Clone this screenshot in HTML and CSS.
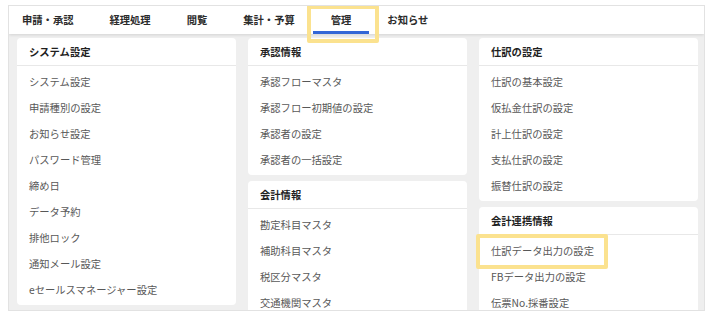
FILE: index.html
```html
<!DOCTYPE html>
<html lang="ja">
<head>
    <meta charset="UTF-8">
    <meta name="viewport" content="width=device-width, initial-scale=1.0">
    <title>管理</title>
    <link rel="stylesheet" href="styles.css">
</head>
<body>

<div class="frame">
    <nav class="tabs">
        <div class="tab">申請・承認</div>
        <div class="tab">経理処理</div>
        <div class="tab">閲覧</div>
        <div class="tab">集計・予算</div>
        <div class="tab active">管理<span class="mark mark-tab"></span></div>
        <div class="tab">お知らせ</div>
    </nav>

    <div class="board">
        <div class="col">
            <div class="card">
                <div class="card-title">システム設定</div>
                <ul class="card-list">
                    <li>システム設定</li>
                    <li>申請種別の設定</li>
                    <li>お知らせ設定</li>
                    <li>パスワード管理</li>
                    <li>締め日</li>
                    <li>データ予約</li>
                    <li>排他ロック</li>
                    <li>通知メール設定</li>
                    <li>eセールスマネージャー設定</li>
                </ul>
            </div>
        </div>

        <div class="col">
            <div class="card">
                <div class="card-title">承認情報</div>
                <ul class="card-list">
                    <li>承認フローマスタ</li>
                    <li>承認フロー初期値の設定</li>
                    <li>承認者の設定</li>
                    <li>承認者の一括設定</li>
                </ul>
            </div>
            <div class="card">
                <div class="card-title">会計情報</div>
                <ul class="card-list">
                    <li>勘定科目マスタ</li>
                    <li>補助科目マスタ</li>
                    <li>税区分マスタ</li>
                    <li>交通機関マスタ</li>
                </ul>
            </div>
        </div>

        <div class="col">
            <div class="card">
                <div class="card-title">仕訳の設定</div>
                <ul class="card-list">
                    <li>仕訳の基本設定</li>
                    <li>仮払金仕訳の設定</li>
                    <li>計上仕訳の設定</li>
                    <li>支払仕訳の設定</li>
                    <li>振替仕訳の設定</li>
                </ul>
            </div>
            <div class="card">
                <div class="card-title">会計連携情報</div>
                <ul class="card-list">
                    <li class="marked">仕訳データ出力の設定<span class="mark mark-item"></span></li>
                    <li>FBデータ出力の設定</li>
                    <li>伝票No.採番設定</li>
                </ul>
            </div>
        </div>
    </div>
</div>

</body>
</html>
```

FILE: styles.css
```css
body {
    margin: 0;
    background-color: #ffffff;
    font-family: "Noto Sans CJK JP", "Noto Sans", sans-serif;
    font-size: 10.3px;
}
.frame {
    margin: 5px 9px 0 8px;
    height: 306px;
    border: 1px solid #e2e2e2;
    box-sizing: border-box;
    display: flex;
    flex-direction: column;
    overflow: hidden;
}
.tabs {
    display: flex;
    height: 28px;
    flex-shrink: 0;
    background-color: #ffffff;
    box-shadow: 0 1px 3px rgba(0, 0, 0, 0.12);
    position: relative;
    z-index: 1;
}
.tab {
    position: relative;
    padding: 0 18px;
    line-height: 28px;
    font-weight: bold;
    color: #2b2b2b;
    white-space: nowrap;
}
.tab:first-child {
    padding-left: 13px;
}
.tab.active::after {
    content: "";
    position: absolute;
    left: 0;
    right: 0;
    bottom: 0;
    height: 3px;
    background-color: #3366d6;
}
.board {
    flex: 1;
    background-color: #efefef;
    padding: 4px 6px 0 8px;
    display: grid;
    grid-template-columns: repeat(3, 1fr);
    gap: 12px;
    overflow: hidden;
}
.col {
    display: flex;
    flex-direction: column;
    gap: 6px;
    min-width: 0;
}
.card {
    background-color: #ffffff;
    border-radius: 4px;
    flex-shrink: 0;
}
.card-title {
    height: 27px;
    line-height: 27px;
    padding: 0 12px;
    border-bottom: 1px solid #e8e8e8;
    font-weight: bold;
    color: #1f1f1f;
}
.card-list {
    list-style: none;
    margin: 0;
    padding: 3px 0 2px;
}
.card-list li {
    position: relative;
    line-height: 26px;
    padding: 0 12px;
    color: #585858;
    white-space: nowrap;
}
/* 黄色の強調枠 */
.mark {
    position: absolute;
    border: 4px solid #fbe28f;
    border-radius: 2px;
    box-sizing: border-box;
    pointer-events: none;
}
.mark-tab {
    left: -6px;
    top: -1px;
    width: 72px;
    height: 38px;
}
.mark-item {
    left: -3px;
    top: -4px;
    width: 132px;
    height: 35px;
}
```
